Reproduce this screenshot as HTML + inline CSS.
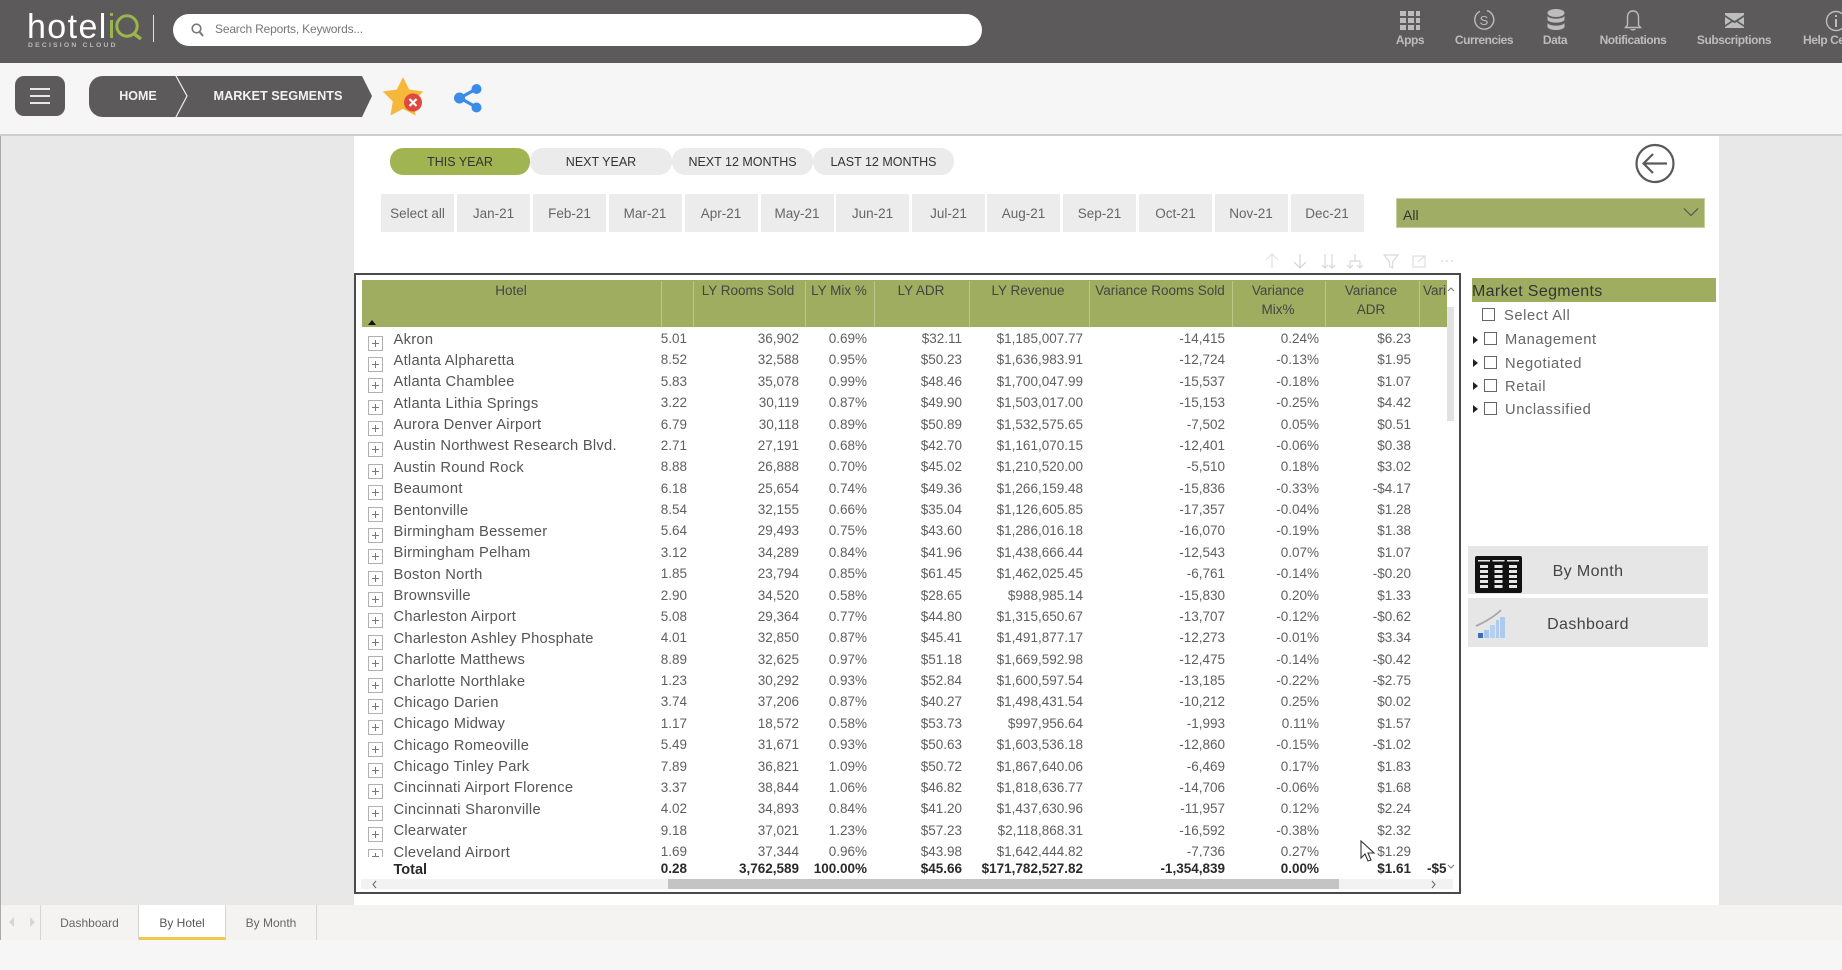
<!DOCTYPE html>
<html><head><meta charset="utf-8"><title>Market Segments</title>
<style>
*{box-sizing:border-box}
html,body{margin:0;padding:0;width:1842px;height:970px;overflow:hidden;background:#f6f6f6;font-family:"Liberation Sans",sans-serif}
.a{position:absolute}
#top{left:0;top:0;width:1842px;height:63px;background:#5c5a5a}
.tl{position:absolute;top:33px;width:100px;text-align:center;font-size:12px;font-weight:bold;letter-spacing:-.45px;color:#bdbdbd;line-height:14px;white-space:nowrap}
.pill{position:absolute;top:148px;height:27px;border-radius:13px;background:#ebebeb;color:#333;font-size:12.5px;line-height:29px;text-align:center}
.mo{position:absolute;top:194px;height:38px;width:73px;background:#ececec;color:#666;font-size:13.5px;line-height:40px;text-align:center;white-space:nowrap}
.hd{position:absolute;top:282px;font-size:13.5px;line-height:18.5px;color:#444;text-align:center;white-space:nowrap;transform:translateX(-50%)}
.sep{position:absolute;top:281px;height:46px;width:1px;background:#bcc88a}
#rows{left:356px;top:327px;width:1091px;height:530px;overflow:hidden;padding-top:1.5px}
.r{position:relative;height:21.375px;line-height:21px;color:#5f5f5f;font-size:13.5px;white-space:nowrap}
.r::before{content:"";position:absolute;left:12px;top:7px;width:13px;height:13px;border:1px solid #b0b0b0;background:linear-gradient(#777,#777) center/7px 1px no-repeat,linear-gradient(#777,#777) center/1px 7px no-repeat}
.r b,.t b{font-weight:inherit;position:absolute;top:0}
.r b:nth-of-type(1){left:37.5px;top:1px;font-size:14.7px;letter-spacing:.28px;color:#555}
.t b{top:1px}
.r i,.t i{font-style:normal;position:absolute;top:0}
.r i{top:-.5px}
.c1{right:760px}.c2{right:648px}.c3{right:580px}.c4{right:485px}.c5{right:364px}.c6{right:222px}.c7{right:128px}.c8{right:36px}
.t{left:356px;top:859px;width:1091px;height:20px;overflow:hidden;font-weight:bold;font-size:13.5px;line-height:20px;color:#2a2a2a;white-space:nowrap}
.seg{position:absolute;font-size:14.7px;line-height:18px;color:#666;letter-spacing:.6px}
.cb{position:absolute;width:13px;height:13px;border:1.5px solid #666;background:#fff}
.tri{position:absolute;width:0;height:0;border-left:5px solid #222;border-top:4px solid transparent;border-bottom:4px solid transparent}
.btn{position:absolute;left:1468px;width:240px;background:#e6e6e6;color:#444;font-size:16px;letter-spacing:.4px;text-align:center}
.tab{position:absolute;top:905px;height:35px;border-right:1px solid #d4d4d4;font-size:12px;line-height:36px;color:#666;text-align:center}
</style></head>
<body>
<div style="position:absolute;left:0;top:0;width:1842px;height:970px;filter:blur(.35px)">

<div id="top" class="a"></div>
<div class="a" style="left:27px;top:7px;font-size:34px;line-height:40px;color:#fff;letter-spacing:1.4px;white-space:nowrap">hotel<span style="color:#9ab54c">i</span></div>
<svg class="a" style="left:112px;top:13px" width="34" height="30" viewBox="0 0 34 30"><circle cx="15" cy="13" r="10.2" fill="none" stroke="#9ab54c" stroke-width="3"/><path d="M21 20l8 6" stroke="#9ab54c" stroke-width="3.4"/></svg>
<div class="a" style="left:28px;top:41px;font-size:6.8px;line-height:9px;font-weight:bold;letter-spacing:2.2px;color:#b9b9b9;white-space:nowrap">DECISION CLOUD</div>
<div class="a" style="left:153px;top:15px;width:1px;height:27px;background:#e2e2e2"></div>
<div class="a" style="left:173px;top:14px;width:809px;height:32px;border-radius:16px;background:#fff"></div>
<svg class="a" style="left:190px;top:22px" width="15" height="16" viewBox="0 0 15 16"><circle cx="6.5" cy="6.5" r="4.3" fill="none" stroke="#777" stroke-width="1.6"/><path d="M9.7 10l3.3 4" stroke="#777" stroke-width="2"/></svg>
<div class="a" style="left:215px;top:22px;font-size:12px;line-height:15px;letter-spacing:-.18px;color:#777;white-space:nowrap">Search Reports, Keywords...</div>

<!-- top right icons -->
<svg class="a" style="left:1390px;top:5px" width="452" height="32" viewBox="0 0 452 32" fill="#bdbdbd">
<path d="M10 7h6v5h-6zM18 7h6v5h-6zM26 7h4v5h-4zM10 14h6v5h-6zM18 14h6v5h-6zM26 14h4v5h-4zM10 21h6v5h-6zM18 21h6v5h-6zM26 21h4v5h-4z" transform="translate(0 -1)"/>
<path d="M97 5.600A9.500 9.500 0 1 1 90 6.200" fill="none" stroke="#bdbdbd" stroke-width="1.400"/>
<text x="94" y="20" font-size="13" text-anchor="middle" fill="#bdbdbd" font-family="Liberation Sans">S</text>
<ellipse cx="166" cy="8" rx="8.500" ry="4"/><path d="M157.500 11c2 3.500 15 3.500 17 0v4c-2 3.500-15 3.500-17 0zM157.500 18c2 3.500 15 3.500 17 0v4c-2 4-15 4-17 0z"/>
<path d="M243 6c-4 0-5.500 3-5.500 6.500V20l-2 2.500h15l-2-2.500v-7.500C248.500 9 247 6 243 6z" fill="none" stroke="#bdbdbd" stroke-width="1.400"/><path d="M240 24c1 2 5 2 6 0z"/>
<path d="M335 8h19v2l-9.500 6-9.500-6zM335 12l6 4-6 4zM354 12v8l-6-4zM335 22l7.500-5 2 1.300 2-1.300 7.500 5v1h-19z"/>
<circle cx="446" cy="16" r="9.500" fill="none" stroke="#bdbdbd" stroke-width="1.400"/><path d="M445 14h2v8h-2zM445 10h2v2h-2z"/>
</svg>
<div class="tl" style="left:1360px">Apps</div>
<div class="tl" style="left:1434px">Currencies</div>
<div class="tl" style="left:1505px">Data</div>
<div class="tl" style="left:1583px">Notifications</div>
<div class="tl" style="left:1684px">Subscriptions</div>
<div class="tl" style="left:1803px;text-align:left">Help Center</div>

<!-- second band -->
<div class="a" style="left:15px;top:76px;width:50px;height:40px;border-radius:9px;background:#5c5a5a"></div>
<div class="a" style="left:30px;top:88px;width:20px;height:2px;background:#e8e8e8;box-shadow:0 7px 0 #e8e8e8,0 14px 0 #e8e8e8"></div>
<svg class="a" style="left:89px;top:76px" width="286" height="41" viewBox="0 0 286 41"><path d="M14 0H273l10 20-10 21H14C6 41 0 35 0 27V14C0 6 6 0 14 0z" fill="#5c5a5a"/><path d="M87 0l11 20-11 21" fill="none" stroke="#f0f0f0" stroke-width="1.200"/></svg>
<div class="a" style="left:100px;top:88px;width:76px;text-align:center;font-size:12.5px;line-height:16px;font-weight:bold;color:#f2f2f2">HOME</div>
<div class="a" style="left:200px;top:88px;width:156px;text-align:center;font-size:12.7px;line-height:16px;font-weight:bold;color:#f2f2f2;white-space:nowrap">MARKET SEGMENTS</div>
<svg class="a" style="left:382px;top:76px" width="46" height="42" viewBox="0 0 46 42"><path d="M21 1l6.200 12.500 14 2-10 10 2.400 14-12.600-6.600-12.600 6.600 2.400-14-10-10 14-2z" fill="#f5b83a"/><circle cx="31" cy="26.500" r="9" fill="#e0483c"/><path d="M27.500 23l7 7M34.500 23l-7 7" stroke="#fff" stroke-width="2.200"/></svg>
<svg class="a" style="left:452px;top:82px" width="32" height="32" viewBox="0 0 32 32"><path d="M24 7L8 16l16 9" fill="none" stroke="#3b8be8" stroke-width="3.200"/><circle cx="24.500" cy="7" r="5" fill="#3b8be8"/><circle cx="7.500" cy="16" r="5.500" fill="#3b8be8"/><circle cx="24.500" cy="25.500" r="5" fill="#3b8be8"/></svg>
<div class="a" style="left:0;top:134px;width:1842px;height:2px;background:#cfcfcf"></div>

<!-- canvas -->
<div class="a" style="left:0;top:136px;width:1842px;height:769px;background:#e8e8e8;border-left:1px solid #aaa"></div>
<div class="a" style="left:354px;top:136px;width:1365px;height:769px;background:#fff"></div>

<div class="pill" style="left:390px;width:140px;background:#a0b552;color:#333">THIS YEAR</div>
<div class="pill" style="left:530px;width:142px">NEXT YEAR</div>
<div class="pill" style="left:672px;width:141px">NEXT 12 MONTHS</div>
<div class="pill" style="left:813px;width:141px">LAST 12 MONTHS</div>

<div class="mo" style="left:381px">Select all</div>
<div class="mo" style="left:457px">Jan-21</div>
<div class="mo" style="left:533px">Feb-21</div>
<div class="mo" style="left:608.500px">Mar-21</div>
<div class="mo" style="left:684.500px">Apr-21</div>
<div class="mo" style="left:760.500px">May-21</div>
<div class="mo" style="left:836px">Jun-21</div>
<div class="mo" style="left:912px">Jul-21</div>
<div class="mo" style="left:987px">Aug-21</div>
<div class="mo" style="left:1063px">Sep-21</div>
<div class="mo" style="left:1139px">Oct-21</div>
<div class="mo" style="left:1214.500px">Nov-21</div>
<div class="mo" style="left:1290.500px">Dec-21</div>

<svg class="a" style="left:1634px;top:143px" width="42" height="42" viewBox="0 0 42 42"><circle cx="21" cy="20.500" r="18.500" fill="none" stroke="#5a5a5a" stroke-width="2.200"/><path d="M33 20.500H10M19 11l-9.500 9.500L19 30" fill="none" stroke="#5a5a5a" stroke-width="2.200"/></svg>

<div class="a" style="left:1396px;top:198px;width:309px;height:30px;background:#a0ad65;border:1.500px solid #c6cfa0"></div>
<div class="a" style="left:1403px;top:206px;font-size:14px;line-height:18px;color:#333">All</div>
<svg class="a" style="left:1683px;top:207px" width="16" height="10" viewBox="0 0 16 10"><path d="M1 1.500l7 7 7-7" fill="none" stroke="#555" stroke-width="1.200"/></svg>

<!-- visual toolbar -->
<svg class="a" style="left:1262px;top:251px" width="196" height="20" viewBox="0 0 196 20" fill="none" stroke="#e2e2e2" stroke-width="1.200">
<path d="M10 17V3M4 9l6-6 6 6"/>
<path d="M38 3v14M32 11l6 6 6-6" stroke="#d4d4d4"/>
<path d="M63 3v14M60 14l3 3 3-3M70 3v14M67 14l3 3 3-3" stroke="#d8d8d8"/>
<path d="M93 3v7M88 10h10M88 10v6M98 10v6M85 14l3 3 3-3M95 14l3 3 3-3" stroke="#d8d8d8"/>
<path d="M122 4h14l-5.500 7v6l-3-2v-4z" stroke="#dadada"/>
<path d="M151 5h12v11h-12zM156 11l7-6M159 5h4v4" stroke="#e0e0e0"/>
<path d="M179 10h2M184 10h2M189 10h2" stroke="#d8d8d8"/>
</svg>

<!-- table -->
<div class="a" style="left:354px;top:273px;width:1107px;height:621px;border:2px solid #4a4a4a;background:#fff"></div>
<div class="a" style="left:362px;top:280px;width:1085px;height:47px;background:#9fad60"></div>
<div class="sep" style="left:661px"></div><div class="sep" style="left:693px"></div><div class="sep" style="left:805px"></div><div class="sep" style="left:874px"></div><div class="sep" style="left:969px"></div><div class="sep" style="left:1089px"></div><div class="sep" style="left:1232px"></div><div class="sep" style="left:1325px"></div><div class="sep" style="left:1419px"></div>
<div class="hd" style="left:511px">Hotel</div>
<div class="hd" style="left:748px">LY Rooms Sold</div>
<div class="hd" style="left:839px">LY Mix %</div>
<div class="hd" style="left:921px">LY ADR</div>
<div class="hd" style="left:1028px">LY Revenue</div>
<div class="hd" style="left:1160px">Variance Rooms Sold</div>
<div class="hd" style="left:1278px">Variance<br>Mix%</div>
<div class="hd" style="left:1371px">Variance<br>ADR</div>
<div class="a" style="left:1423px;top:282px;font-size:13.500px;line-height:18.500px;color:#444;width:23px;overflow:hidden;white-space:nowrap">Variance</div>
<div class="a" style="left:368px;top:319.500px;width:0;height:0;border-left:4px solid transparent;border-right:4px solid transparent;border-bottom:5px solid #111"></div>

<div id="rows" class="a">
<div class="r"><b>Akron</b><i class="c1">5.01</i><i class="c2">36,902</i><i class="c3">0.69%</i><i class="c4">$32.11</i><i class="c5">$1,185,007.77</i><i class="c6">-14,415</i><i class="c7">0.24%</i><i class="c8">$6.23</i></div>
<div class="r"><b>Atlanta Alpharetta</b><i class="c1">8.52</i><i class="c2">32,588</i><i class="c3">0.95%</i><i class="c4">$50.23</i><i class="c5">$1,636,983.91</i><i class="c6">-12,724</i><i class="c7">-0.13%</i><i class="c8">$1.95</i></div>
<div class="r"><b>Atlanta Chamblee</b><i class="c1">5.83</i><i class="c2">35,078</i><i class="c3">0.99%</i><i class="c4">$48.46</i><i class="c5">$1,700,047.99</i><i class="c6">-15,537</i><i class="c7">-0.18%</i><i class="c8">$1.07</i></div>
<div class="r"><b>Atlanta Lithia Springs</b><i class="c1">3.22</i><i class="c2">30,119</i><i class="c3">0.87%</i><i class="c4">$49.90</i><i class="c5">$1,503,017.00</i><i class="c6">-15,153</i><i class="c7">-0.25%</i><i class="c8">$4.42</i></div>
<div class="r"><b>Aurora Denver Airport</b><i class="c1">6.79</i><i class="c2">30,118</i><i class="c3">0.89%</i><i class="c4">$50.89</i><i class="c5">$1,532,575.65</i><i class="c6">-7,502</i><i class="c7">0.05%</i><i class="c8">$0.51</i></div>
<div class="r"><b>Austin Northwest Research Blvd.</b><i class="c1">2.71</i><i class="c2">27,191</i><i class="c3">0.68%</i><i class="c4">$42.70</i><i class="c5">$1,161,070.15</i><i class="c6">-12,401</i><i class="c7">-0.06%</i><i class="c8">$0.38</i></div>
<div class="r"><b>Austin Round Rock</b><i class="c1">8.88</i><i class="c2">26,888</i><i class="c3">0.70%</i><i class="c4">$45.02</i><i class="c5">$1,210,520.00</i><i class="c6">-5,510</i><i class="c7">0.18%</i><i class="c8">$3.02</i></div>
<div class="r"><b>Beaumont</b><i class="c1">6.18</i><i class="c2">25,654</i><i class="c3">0.74%</i><i class="c4">$49.36</i><i class="c5">$1,266,159.48</i><i class="c6">-15,836</i><i class="c7">-0.33%</i><i class="c8">-$4.17</i></div>
<div class="r"><b>Bentonville</b><i class="c1">8.54</i><i class="c2">32,155</i><i class="c3">0.66%</i><i class="c4">$35.04</i><i class="c5">$1,126,605.85</i><i class="c6">-17,357</i><i class="c7">-0.04%</i><i class="c8">$1.28</i></div>
<div class="r"><b>Birmingham Bessemer</b><i class="c1">5.64</i><i class="c2">29,493</i><i class="c3">0.75%</i><i class="c4">$43.60</i><i class="c5">$1,286,016.18</i><i class="c6">-16,070</i><i class="c7">-0.19%</i><i class="c8">$1.38</i></div>
<div class="r"><b>Birmingham Pelham</b><i class="c1">3.12</i><i class="c2">34,289</i><i class="c3">0.84%</i><i class="c4">$41.96</i><i class="c5">$1,438,666.44</i><i class="c6">-12,543</i><i class="c7">0.07%</i><i class="c8">$1.07</i></div>
<div class="r"><b>Boston North</b><i class="c1">1.85</i><i class="c2">23,794</i><i class="c3">0.85%</i><i class="c4">$61.45</i><i class="c5">$1,462,025.45</i><i class="c6">-6,761</i><i class="c7">-0.14%</i><i class="c8">-$0.20</i></div>
<div class="r"><b>Brownsville</b><i class="c1">2.90</i><i class="c2">34,520</i><i class="c3">0.58%</i><i class="c4">$28.65</i><i class="c5">$988,985.14</i><i class="c6">-15,830</i><i class="c7">0.20%</i><i class="c8">$1.33</i></div>
<div class="r"><b>Charleston Airport</b><i class="c1">5.08</i><i class="c2">29,364</i><i class="c3">0.77%</i><i class="c4">$44.80</i><i class="c5">$1,315,650.67</i><i class="c6">-13,707</i><i class="c7">-0.12%</i><i class="c8">-$0.62</i></div>
<div class="r"><b>Charleston Ashley Phosphate</b><i class="c1">4.01</i><i class="c2">32,850</i><i class="c3">0.87%</i><i class="c4">$45.41</i><i class="c5">$1,491,877.17</i><i class="c6">-12,273</i><i class="c7">-0.01%</i><i class="c8">$3.34</i></div>
<div class="r"><b>Charlotte Matthews</b><i class="c1">8.89</i><i class="c2">32,625</i><i class="c3">0.97%</i><i class="c4">$51.18</i><i class="c5">$1,669,592.98</i><i class="c6">-12,475</i><i class="c7">-0.14%</i><i class="c8">-$0.42</i></div>
<div class="r"><b>Charlotte Northlake</b><i class="c1">1.23</i><i class="c2">30,292</i><i class="c3">0.93%</i><i class="c4">$52.84</i><i class="c5">$1,600,597.54</i><i class="c6">-13,185</i><i class="c7">-0.22%</i><i class="c8">-$2.75</i></div>
<div class="r"><b>Chicago Darien</b><i class="c1">3.74</i><i class="c2">37,206</i><i class="c3">0.87%</i><i class="c4">$40.27</i><i class="c5">$1,498,431.54</i><i class="c6">-10,212</i><i class="c7">0.25%</i><i class="c8">$0.02</i></div>
<div class="r"><b>Chicago Midway</b><i class="c1">1.17</i><i class="c2">18,572</i><i class="c3">0.58%</i><i class="c4">$53.73</i><i class="c5">$997,956.64</i><i class="c6">-1,993</i><i class="c7">0.11%</i><i class="c8">$1.57</i></div>
<div class="r"><b>Chicago Romeoville</b><i class="c1">5.49</i><i class="c2">31,671</i><i class="c3">0.93%</i><i class="c4">$50.63</i><i class="c5">$1,603,536.18</i><i class="c6">-12,860</i><i class="c7">-0.15%</i><i class="c8">-$1.02</i></div>
<div class="r"><b>Chicago Tinley Park</b><i class="c1">7.89</i><i class="c2">36,821</i><i class="c3">1.09%</i><i class="c4">$50.72</i><i class="c5">$1,867,640.06</i><i class="c6">-6,469</i><i class="c7">0.17%</i><i class="c8">$1.83</i></div>
<div class="r"><b>Cincinnati Airport Florence</b><i class="c1">3.37</i><i class="c2">38,844</i><i class="c3">1.06%</i><i class="c4">$46.82</i><i class="c5">$1,818,636.77</i><i class="c6">-14,706</i><i class="c7">-0.06%</i><i class="c8">$1.68</i></div>
<div class="r"><b>Cincinnati Sharonville</b><i class="c1">4.02</i><i class="c2">34,893</i><i class="c3">0.84%</i><i class="c4">$41.20</i><i class="c5">$1,437,630.96</i><i class="c6">-11,957</i><i class="c7">0.12%</i><i class="c8">$2.24</i></div>
<div class="r"><b>Clearwater</b><i class="c1">9.18</i><i class="c2">37,021</i><i class="c3">1.23%</i><i class="c4">$57.23</i><i class="c5">$2,118,868.31</i><i class="c6">-16,592</i><i class="c7">-0.38%</i><i class="c8">$2.32</i></div>
<div class="r"><b>Cleveland Airport</b><i class="c1">1.69</i><i class="c2">37,344</i><i class="c3">0.96%</i><i class="c4">$43.98</i><i class="c5">$1,642,444.82</i><i class="c6">-7,736</i><i class="c7">0.27%</i><i class="c8">$1.29</i></div>
</div>
<div class="t a">
<b style="left:37.500px;font-size:14.500px">Total</b>
<div style="position:absolute;left:305px;top:0;width:26px;height:20px;overflow:hidden"><i style="right:0">0.28</i></div>
<i class="c2">3,762,589</i><i class="c3">100.00%</i><i class="c4">$45.66</i><i class="c5">$171,782,527.82</i><i class="c6">-1,354,839</i><i class="c7">0.00%</i><i class="c8">$1.61</i>
<div style="position:absolute;left:1071px;top:0;width:19px;height:20px;overflow:hidden"><i style="left:0">-$58</i></div>
</div>

<!-- scrollbars -->
<div class="a" style="left:1447px;top:307px;width:7px;height:114px;background:#e2e2e2"></div>
<svg class="a" style="left:1447px;top:286px" width="8" height="6" viewBox="0 0 8 6"><path d="M1 5l3-3 3 3" fill="none" stroke="#777"/></svg>
<svg class="a" style="left:1447px;top:864px" width="8" height="6" viewBox="0 0 8 6"><path d="M1 1l3 3 3-3" fill="none" stroke="#777"/></svg>
<div class="a" style="left:361px;top:879px;width:1092px;height:10px;background:#f2f2f2"></div>
<div class="a" style="left:668px;top:879px;width:671px;height:10px;background:#c4c4c4"></div>
<svg class="a" style="left:371px;top:880px" width="7" height="9" viewBox="0 0 7 9"><path d="M5 1L2 4.500 5 8" fill="none" stroke="#666"/></svg>
<svg class="a" style="left:1430px;top:880px" width="7" height="9" viewBox="0 0 7 9"><path d="M2 1l3 3.500L2 8" fill="none" stroke="#666"/></svg>

<!-- cursor -->
<svg class="a" style="left:1360px;top:840px" width="16" height="24" viewBox="0 0 16 24"><path d="M1 1v17l4-4 3 7 3-1-3-7h6z" fill="#fff" stroke="#333" stroke-width="1.100"/></svg>

<!-- market segments -->
<div class="a" style="left:1472px;top:278px;width:244px;height:24px;background:#9fad60;color:#333;font-size:16px;letter-spacing:.35px;line-height:27px;white-space:nowrap">Market Segments</div>
<div class="cb" style="left:1482px;top:308px"></div><div class="seg" style="left:1504px;top:307px">Select All</div>
<div class="tri" style="left:1473px;top:336px"></div><div class="cb" style="left:1484px;top:332px"></div><div class="seg" style="left:1505px;top:331px">Management</div>
<div class="tri" style="left:1473px;top:359px"></div><div class="cb" style="left:1484px;top:356px"></div><div class="seg" style="left:1505px;top:355px">Negotiated</div>
<div class="tri" style="left:1473px;top:382px"></div><div class="cb" style="left:1484px;top:379px"></div><div class="seg" style="left:1505px;top:378px">Retail</div>
<div class="tri" style="left:1473px;top:405px"></div><div class="cb" style="left:1484px;top:402px"></div><div class="seg" style="left:1505px;top:401px">Unclassified</div>

<div class="btn" style="top:546px;height:48px;line-height:51px">By Month</div>
<div class="btn" style="top:598px;height:49px;line-height:53px">Dashboard</div>
<svg class="a" style="left:1475px;top:556px" width="47" height="37" viewBox="0 0 47 37"><rect width="47" height="37" rx="2" fill="#111"/><g fill="#e6e6e6"><path d="M3 4h12v1.500H3zM17.500 4h12v1.500h-12zM32 4h12v1.500H32z"/><path d="M5 9h8v3H5zM5 14h8v3H5zM5 19h8v3H5zM5 24h8v3H5zM5 29h8v3H5zM19.500 9h8v3h-8zM19.500 14h8v3h-8zM19.500 19h8v3h-8zM19.500 24h8v3h-8zM19.500 29h8v3h-8zM34 9h8v3h-8zM34 14h8v3h-8zM34 19h8v3h-8zM34 24h8v3h-8zM34 29h8v3h-8z"/></g></svg>
<svg class="a" style="left:1475px;top:609px" width="32" height="30" viewBox="0 0 32 30"><path d="M1 17C10 13 19 8 26 1" fill="none" stroke="#a9a9a9" stroke-width="1.800"/><path d="M3 24h5v5H3z" fill="#3d6fb4"/><path d="M9 21h5v8H9z" fill="#a8c5ea"/><path d="M15 16h5v13h-5z" fill="#b5d0f0"/><path d="M21 11h3v18h-3zM25 8h5v21h-5z" fill="#aecbee"/></svg>

<!-- tabs -->
<div class="a" style="left:0;top:905px;width:1842px;height:35px;background:#f4f3f2;border-left:1px solid #aaa"></div>
<svg class="a" style="left:6px;top:916px" width="30" height="12" viewBox="0 0 30 12"><path d="M8 1L3 6l5 5zM24 1l5 5-5 5z" fill="#d6d6d6"/></svg>
<div class="tab" style="left:0;width:41px"></div>
<div class="tab" style="left:41px;width:98px">Dashboard</div>
<div class="tab" style="left:139px;width:87px;background:#fff;color:#555;border-right:1px solid #d4d4d4;border-bottom:3px solid #f0c94f">By Hotel</div>
<div class="tab" style="left:226px;width:91px">By Month</div>
</div>
</body></html>
